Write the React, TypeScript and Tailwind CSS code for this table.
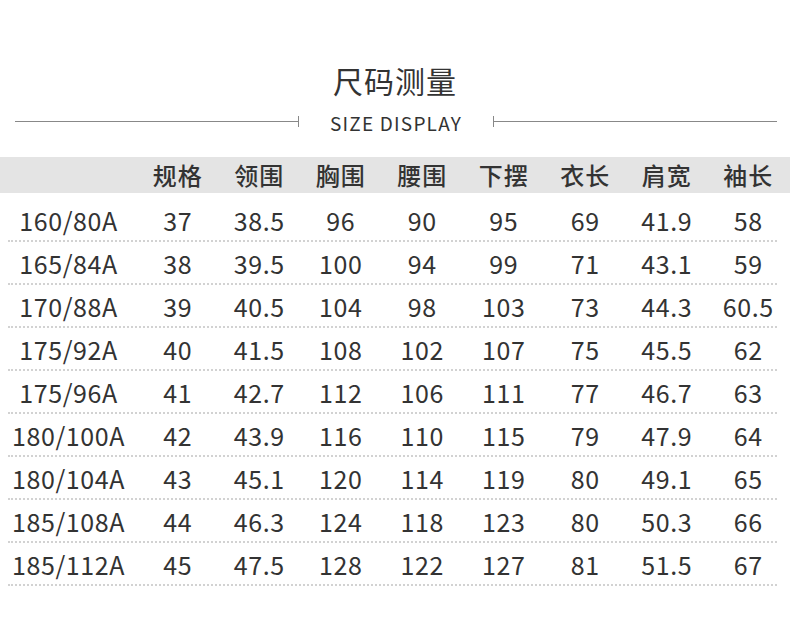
import React from 'react'

const heads = ['规格', '领围', '胸围', '腰围', '下摆', '衣长', '肩宽', '袖长']

const rows = [
  ['160/80A', '37', '38.5', '96', '90', '95', '69', '41.9', '58'],
  ['165/84A', '38', '39.5', '100', '94', '99', '71', '43.1', '59'],
  ['170/88A', '39', '40.5', '104', '98', '103', '73', '44.3', '60.5'],
  ['175/92A', '40', '41.5', '108', '102', '107', '75', '45.5', '62'],
  ['175/96A', '41', '42.7', '112', '106', '111', '77', '46.7', '63'],
  ['180/100A', '42', '43.9', '116', '110', '115', '79', '47.9', '64'],
  ['180/104A', '43', '45.1', '120', '114', '119', '80', '49.1', '65'],
  ['185/108A', '44', '46.3', '124', '118', '123', '80', '50.3', '66'],
  ['185/112A', '45', '47.5', '128', '122', '127', '81', '51.5', '67'],
]

const cols = 'grid grid-cols-[137px_repeat(8,81.5px)]'

const App = () => {
  return (
    <div className="h-[631px] w-[790px] bg-white font-['Noto_Sans_CJK_SC',sans-serif] text-[#333]">
      <div className="pt-[64px] text-center text-[30px] leading-[32px] tracking-[1px]">尺码测量</div>

      <div className="mt-[13px] flex items-center">
        <div className="ml-[15px] h-px w-[283px] bg-[#888]" />
        <div className="h-[11px] w-px bg-[#888]" />
        <div className="mt-[4px] flex-1 text-center text-[19px] leading-[20px] tracking-[1.2px]">SIZE DISPLAY</div>
        <div className="h-[11px] w-px bg-[#888]" />
        <div className="mr-[13px] h-px w-[283px] bg-[#888]" />
      </div>

      <div className={`${cols} mt-[24px] h-[36px] items-center bg-[#e4e4e4] text-[24px] font-medium`}>
        <div />
        {heads.map((h) => (
          <div key={h} className="text-center tracking-[1px]">
            {h}
          </div>
        ))}
      </div>

      <div className="mt-[6px]">
        {rows.map((r) => (
          <div key={r[0]}>
            <div className={`${cols} h-[41px] items-center text-[25px] leading-none tracking-[0.6px]`}>
              {r.map((v, i) => (
                <div key={i} className="pt-[2px] text-center">
                  {v}
                </div>
              ))}
            </div>
            <div className="ml-[8px] mr-[13px] border-t-2 border-dotted border-[#d2d2d2]" />
          </div>
        ))}
      </div>
    </div>
  )
}

export default App
